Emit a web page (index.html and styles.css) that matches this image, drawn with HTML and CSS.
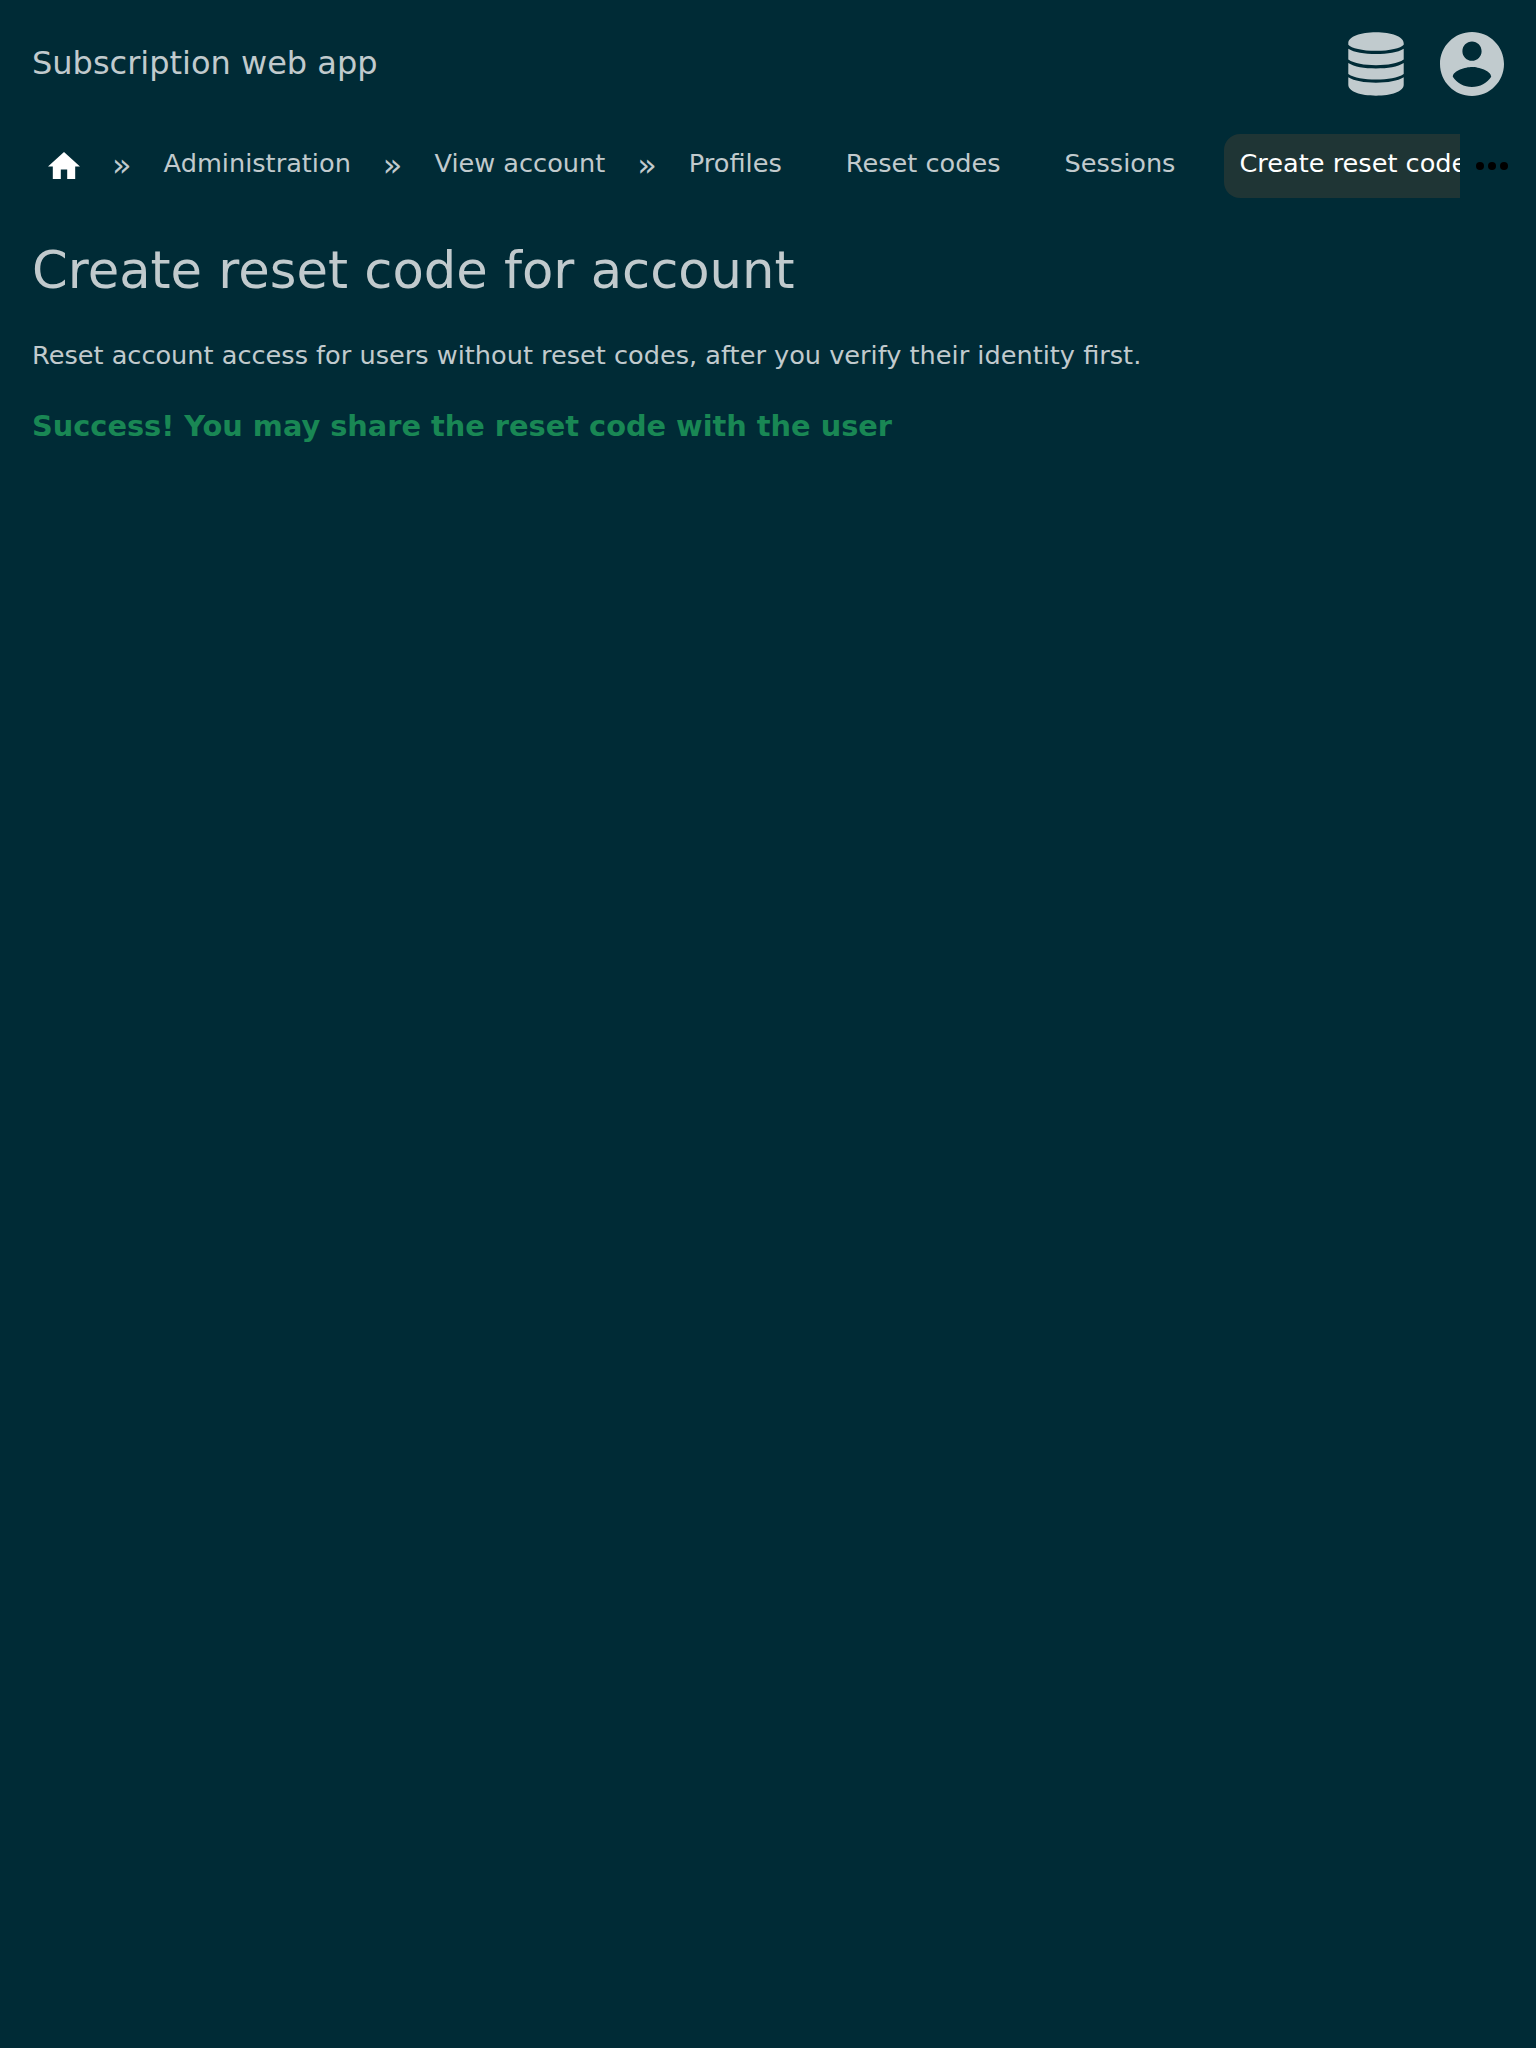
FILE: index.html
```
<!DOCTYPE html>
<html lang="en">
<head>
<meta charset="utf-8">
<title>Create reset code for account</title>
<link rel="stylesheet" href="styles.css">
</head>
<body>
<header class="header">
  <div class="title">Subscription web app</div>
  <div class="menus">
    <svg class="icon-db" viewBox="-0.3 0 56.600 64"><path d="M0 11C0 4.500 12.500 0 28 0s28 4.500 28 11v1.500C53 16 42 18.700 28 18.700S3 16 0 12.500zM0 16.500c6 3.800 16 5.300 28 5.300s22-1.500 28-5.300V27.500c-6 4-16 5.700-28 5.700S6 31.500 0 27.500zM0 31c6 3.900 16 5.500 28 5.500s22-1.600 28-5.500V42c-6 4-16 5.600-28 5.600S6 46 0 42zM0 45.500c6 3.800 16 5.400 28 5.400s22-1.600 28-5.400V53c0 7-12.500 11-28 11S0 60 0 53z"/></svg>
    <svg class="icon-user" viewBox="2 2 20 20"><path d="M12 2C6.480 2 2 6.480 2 12s4.480 10 10 10 10-4.480 10-10S17.520 2 12 2zm0 3c1.660 0 3 1.340 3 3s-1.340 3-3 3-3-1.340-3-3 1.340-3 3-3zm0 14.200c-2.500 0-4.710-1.280-6-3.220.03-1.990 4-3.080 6-3.080 1.990 0 5.970 1.090 6 3.080-1.290 1.940-3.500 3.220-6 3.220z"/></svg>
  </div>
</header>
<nav class="nav">
  <div class="crumbs">
    <a class="item home"><svg viewBox="2 3 20 17"><path d="M10 20v-6h4v6h5v-8h3L12 3 2 12h3v8z"/></svg></a>
    <span class="sep">»</span><a class="item">Administration</a>
    <span class="sep">»</span><a class="item">View account</a>
    <span class="sep">»</span><a class="item">Profiles</a>
    <a class="item next">Reset codes</a>
    <a class="item next">Sessions</a>
    <a class="item next current">Create reset code</a>
  </div>
  <svg class="more" viewBox="0 0 32 8"><circle cx="4" cy="4" r="4"/><circle cx="16" cy="4" r="4"/><circle cx="28" cy="4" r="4"/></svg>
</nav>
<main class="content">
  <h1>Create reset code for account</h1>
  <p>Reset account access for users without reset codes, after you verify their identity first.</p>
  <div class="success">Success! You may share the reset code with the user</div>
</main>
</body>
</html>
```
FILE: styles.css
```
body { margin: 0; background: #002b36; color: #c1cacd; font-family: "DejaVu Sans", sans-serif; font-size: 25.6px; }
.header { display: flex; justify-content: space-between; align-items: center; height: 128px; padding: 0 32px; font-size: 32px; }
.title { line-height: 64px; padding-bottom: 2px; }
.menus { display: flex; align-items: center; gap: 36px; }
.menus svg { height: 64px; fill: #c1cbce; }
.icon-db { width: 56px; }
.icon-user { width: 64px; }
.nav { display: flex; align-items: center; height: 76px; padding: 0 28px 0 32px; }
.crumbs { display: flex; flex: 1; overflow: hidden; margin-right: 16px; white-space: nowrap; }
.item { flex: none; padding: 0 16px; height: 64px; line-height: 58px; }
.home svg { width: 32px; height: 27.2px; fill: #fff; margin-top: 18px; display: block; }
.sep { flex: none; padding: 0 16px; font-size: 32px; line-height: 63px; }
.next { margin-left: 32px; }
.current { margin-left: 32.5px; padding-left: 15.5px; background: #1f3535; color: #fff; border-radius: 16px; }
.more { width: 32px; height: 8px; }
.content { padding: 0 32px; }
h1 { font-size: 51.2px; font-weight: 400; line-height: 60px; margin: 36px 0 0; }
p { line-height: 30px; margin: 40px 0 0; }
.success { color: #198754; font-size: 28.8px; font-weight: 700; line-height: 34px; margin-top: 39px; }
```
